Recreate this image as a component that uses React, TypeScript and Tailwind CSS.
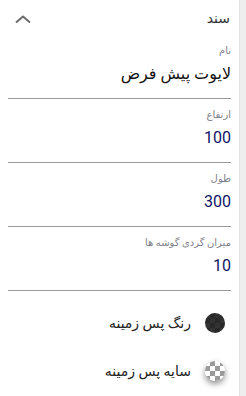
import React from "react";

const fields = [
  { label: "نام", value: "لایوت پیش فرض", numeric: false },
  { label: "ارتفاع", value: "100", numeric: true },
  { label: "طول", value: "300", numeric: true },
  { label: "میزان گردی گوشه ها", value: "10", numeric: true },
];

function Swatch({ dark, shadow }: { dark?: boolean; shadow?: boolean }) {
  return (
    <div
      className={`relative w-5 h-5 rounded-full overflow-hidden shrink-0 bg-[repeating-conic-gradient(#9a9a9a_0_25%,#ffffff_0_50%)] bg-[length:10px_10px] ${
        shadow ? "shadow-[0_3px_6px_rgba(0,0,0,0.45)]" : ""
      }`}
    >
      {dark && <div className="absolute inset-0 bg-[#1c1c1c]/90" />}
    </div>
  );
}

export default function App() {
  return (
    <div className="w-[246px] h-[396px] flex bg-white overflow-hidden font-['Roboto','DejaVu_Sans',sans-serif]">
      {/* Panel */}
      <div dir="rtl" className="flex-1 flex flex-col px-2">
        {/* Header */}
        <div className="h-[36px] flex items-center justify-between pt-[1px]">
          <span className="text-[14px] text-[#333] pr-[1px]">سند</span>
          <svg width="16" height="8" viewBox="0 0 16 8" className="ml-[7px]">
            <polyline points="1,7.5 8,1.5 15,7.5" fill="none" stroke="#6b6b6b" strokeWidth="2" />
          </svg>
        </div>

        {/* Fields */}
        {fields.map((f, i) => (
          <div
            key={f.label}
            className={`flex flex-col border-b border-[#9a9a9a] pb-[12px] ${i === 0 ? "pt-[9px]" : "pt-[10px]"}`}
          >
            <label className="text-[10px] leading-[12px] text-[#80808a]">{f.label}</label>
            <div
              className={`mt-[5px] text-[16px] leading-[24px] ${
                f.numeric ? "text-[#0f1466]" : "text-[#111]"
              }`}
            >
              {f.value}
            </div>
          </div>
        ))}

        {/* Background options */}
        <div className="flex flex-col pt-[8px]">
          <div className="h-12 flex items-center gap-[14px] pr-[6px]">
            <Swatch dark />
            <span className="text-[14px] text-[#222]">رنگ پس زمینه</span>
          </div>
          <div className="h-12 flex items-center gap-[14px] pr-[6px]">
            <Swatch shadow />
            <span className="text-[14px] text-[#222]">سایه پس زمینه</span>
          </div>
        </div>
      </div>

      {/* Scroll track */}
      <div className="w-[7px] bg-[#eeeeee] border-l border-[#e2e2e2] shrink-0" />
    </div>
  );
}
